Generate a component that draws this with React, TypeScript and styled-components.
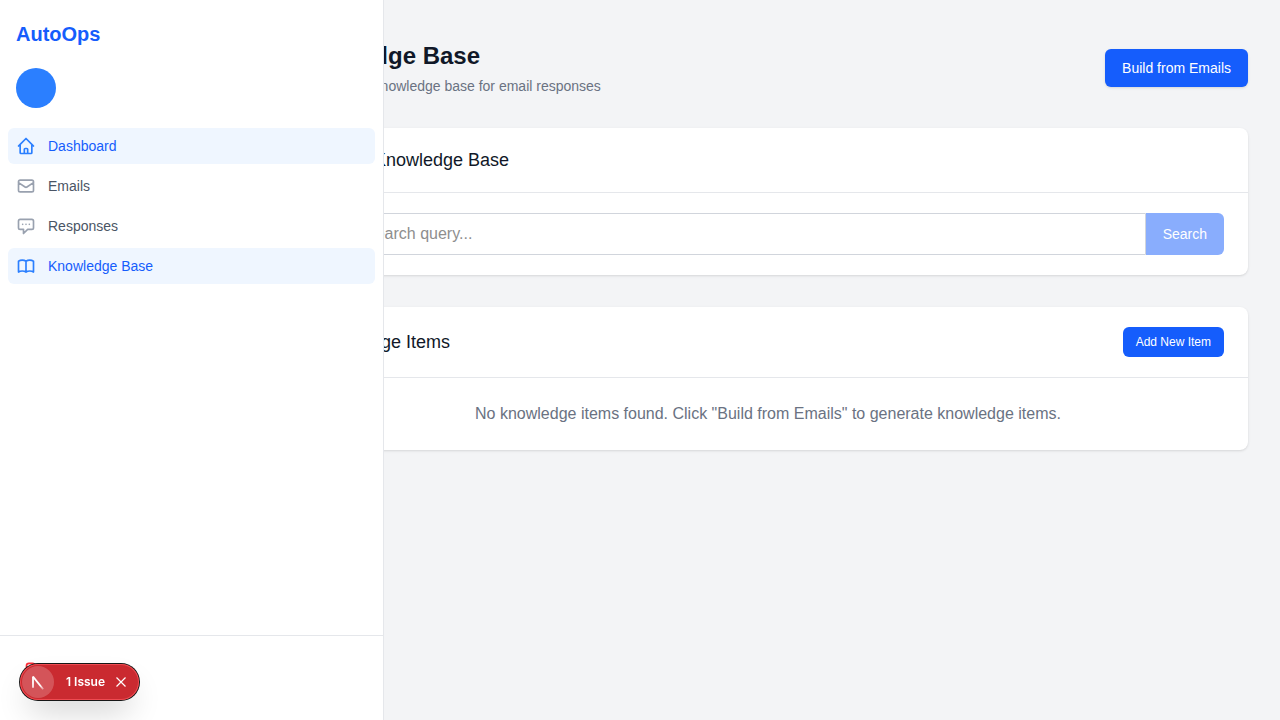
import React from "react";
import styled, { createGlobalStyle } from "styled-components";
import {
  HiOutlineBookOpen,
  HiOutlineChatAlt,
  HiOutlineHome,
  HiOutlineLogout,
  HiOutlineMail,
} from "react-icons/hi";

const GlobalStyle = createGlobalStyle`
  *, *::before, *::after { box-sizing: border-box; }
  body {
    margin: 0;
    background: #f3f4f6;
    color: #101828;
    font-family: "Liberation Sans", Arial, sans-serif;
    font-size: 16px;
    line-height: 24px;
  }
  h1, h2, p, ul { margin: 0; padding: 0; }
  button, input { font-family: inherit; margin: 0; }
`;

const Page = styled.div`
  min-height: 100vh;
  padding-left: 256px;
`;

const Sidebar = styled.aside`
  position: fixed;
  top: 0;
  bottom: 0;
  left: 0;
  z-index: 10;
  display: flex;
  flex-direction: column;
  width: 384px;
  max-width: 100%;
  background: #fff;
  border-right: 1px solid #e5e7eb;
`;

const Brand = styled.a`
  padding: 20px 16px;
  color: #155dfc;
  font-size: 20px;
  font-weight: 700;
  line-height: 28px;
  text-decoration: none;
`;

const Avatar = styled.div`
  width: 40px;
  height: 40px;
  margin: 0 16px 20px;
  border-radius: 50%;
  background: #2b7fff;
`;

const NavList = styled.ul`
  flex: 1;
  display: flex;
  flex-direction: column;
  gap: 4px;
  padding: 0 8px;
  list-style: none;
`;

const NavLink = styled.a<{ $active?: boolean }>`
  display: flex;
  align-items: center;
  gap: 12px;
  padding: 8px;
  border-radius: 6px;
  background: ${(p) => (p.$active ? "#eff6ff" : "transparent")};
  color: ${(p) => (p.$active ? "#155dfc" : "#4a5565")};
  font-size: 14px;
  line-height: 20px;
  text-decoration: none;

  svg {
    width: 20px;
    height: 20px;
    color: ${(p) => (p.$active ? "#2b7fff" : "#99a1af")};
  }
`;

const SidebarFooter = styled.div`
  padding: 16px 16px 32px;
  border-top: 1px solid #e5e7eb;
`;

const LogoutButton = styled.button`
  display: flex;
  align-items: center;
  gap: 12px;
  padding: 8px;
  border: 0;
  background: transparent;
  color: #fb2c36;
  font-size: 14px;
  line-height: 20px;

  svg {
    width: 20px;
    height: 20px;
  }
`;

const Main = styled.main`
  display: flex;
  flex-direction: column;
  gap: 32px;
  padding: 40px 32px;
`;

const PageHeader = styled.header`
  display: flex;
  align-items: center;
  justify-content: space-between;
`;

const Title = styled.h1`
  font-size: 24px;
  font-weight: 700;
  line-height: 32px;
`;

const Subtitle = styled.p`
  margin-top: 4px;
  color: #6a7282;
  font-size: 14px;
  line-height: 20px;
`;

const Button = styled.button<{ $small?: boolean }>`
  padding: ${(p) => (p.$small ? "6px 12px" : "8px 16px")};
  border: 1px solid transparent;
  border-radius: 6px;
  background: #155dfc;
  color: #fff;
  font-size: ${(p) => (p.$small ? "12px" : "14px")};
  line-height: ${(p) => (p.$small ? "16px" : "20px")};
  box-shadow: ${(p) =>
    p.$small ? "none" : "0 1px 3px rgba(0,0,0,.1), 0 1px 2px -1px rgba(0,0,0,.1)"};
`;

const SearchButton = styled(Button)`
  border-radius: 0 6px 6px 0;
  box-shadow: none;
  opacity: 0.5;
`;

const Card = styled.section`
  border-radius: 8px;
  background: #fff;
  box-shadow: 0 1px 3px rgba(0, 0, 0, 0.1), 0 1px 2px -1px rgba(0, 0, 0, 0.1);
`;

const CardHeader = styled.div`
  display: flex;
  align-items: center;
  justify-content: space-between;
  padding: 20px 24px;
  border-bottom: 1px solid #e5e7eb;
`;

const CardTitle = styled.h2`
  font-size: 18px;
  font-weight: 400;
  line-height: 24px;
`;

const SearchForm = styled.form`
  display: flex;
  padding: 20px 24px;
`;

const SearchInput = styled.input`
  flex: 1;
  min-width: 0;
  padding: 8px 12px;
  border: 1px solid #d1d5dc;
  border-radius: 6px 0 0 6px;
  background: #fff;
  color: #101828;
  font-size: 16px;
  line-height: 24px;

  &::placeholder { color: #8e8e8e; }
`;

const EmptyMessage = styled.p`
  padding: 24px;
  color: #6a7282;
  text-align: center;
`;

const IssuePill = styled.div`
  position: fixed;
  bottom: 20px;
  left: 20px;
  z-index: 20;
  display: flex;
  align-items: center;
  height: 36px;
  padding: 2px;
  border-radius: 18px;
  background: #ca2a30;
  color: #fff;
  font-family: Inter, sans-serif;
  box-shadow: 0 0 0 1px #171717, inset 0 0 0 1px rgba(255, 90, 95, 0.7),
    0 16px 32px -8px rgba(0, 0, 0, 0.24);
`;

const PillButton = styled.button`
  display: flex;
  align-items: center;
  justify-content: center;
  padding: 0;
  border: 0;
  background: transparent;
  color: inherit;
  font-size: 12px;
  font-weight: 600;
  line-height: 16px;
`;

const LogoButton = styled(PillButton)`
  width: 32px;
  height: 32px;
  margin-right: 12px;
  border-radius: 50%;
  background: rgba(255, 255, 255, 0.2);
`;

const CloseButton = styled(PillButton)`
  width: 24px;
  height: 24px;
  margin: 0 4px;
`;

const navItems = [
  { label: "Dashboard", Icon: HiOutlineHome, active: true },
  { label: "Emails", Icon: HiOutlineMail, active: false },
  { label: "Responses", Icon: HiOutlineChatAlt, active: false },
  { label: "Knowledge Base", Icon: HiOutlineBookOpen, active: true },
];

export default function App() {
  return (
    <>
      <GlobalStyle />
      <Sidebar>
        <Brand href="#">AutoOps</Brand>
        <Avatar />
        <NavList>
          {navItems.map(({ label, Icon, active }) => (
            <li key={label}>
              <NavLink href="#" $active={active}>
                <Icon aria-hidden />
                {label}
              </NavLink>
            </li>
          ))}
        </NavList>
        <SidebarFooter>
          <LogoutButton type="button" aria-label="Logout">
            <HiOutlineLogout aria-hidden />
          </LogoutButton>
        </SidebarFooter>
      </Sidebar>

      <Page>
        <Main>
          <PageHeader>
            <div>
              <Title>Knowledge Base</Title>
              <Subtitle>Manage your knowledge base for email responses</Subtitle>
            </div>
            <Button type="button">Build from Emails</Button>
          </PageHeader>

          <Card>
            <CardHeader>
              <CardTitle>Search Knowledge Base</CardTitle>
            </CardHeader>
            <SearchForm onSubmit={(e) => e.preventDefault()}>
              <SearchInput
                type="text"
                aria-label="Search query"
                placeholder="Enter search query..."
              />
              <SearchButton type="submit" disabled>
                Search
              </SearchButton>
            </SearchForm>
          </Card>

          <Card>
            <CardHeader>
              <CardTitle>Knowledge Items</CardTitle>
              <Button type="button" $small>
                Add New Item
              </Button>
            </CardHeader>
            <EmptyMessage>
              No knowledge items found. Click "Build from Emails" to generate knowledge items.
            </EmptyMessage>
          </Card>
        </Main>
      </Page>

      <IssuePill>
        <LogoButton type="button" aria-label="Open developer tools">
          <svg width="32" height="32" viewBox="0 0 32 32" fill="none" aria-hidden>
            <defs>
              <linearGradient id="stem" x1="11" y1="10" x2="11" y2="22" gradientUnits="userSpaceOnUse">
                <stop offset="0.6" stopColor="#fff" />
                <stop offset="1" stopColor="#fff" stopOpacity="0.8" />
              </linearGradient>
              <linearGradient id="slash" x1="15" y1="15" x2="21" y2="24" gradientUnits="userSpaceOnUse">
                <stop offset="0.5" stopColor="#fff" />
                <stop offset="1" stopColor="#fff" stopOpacity="0.3" />
              </linearGradient>
            </defs>
            <path d="M11 21.8V10.4" stroke="url(#stem)" strokeWidth="1.8" />
            <path d="M11 10.6L21.2 23.2" stroke="url(#slash)" strokeWidth="1.8" />
          </svg>
        </LogoButton>
        <PillButton type="button">1 Issue</PillButton>
        <CloseButton type="button" aria-label="Dismiss issues">
          <svg width="10" height="10" viewBox="0 0 10 10" fill="none" stroke="currentColor" strokeWidth="1.2" aria-hidden>
            <path d="M0.5 0.5l9 9M9.5 0.5l-9 9" />
          </svg>
        </CloseButton>
      </IssuePill>
    </>
  );
}
